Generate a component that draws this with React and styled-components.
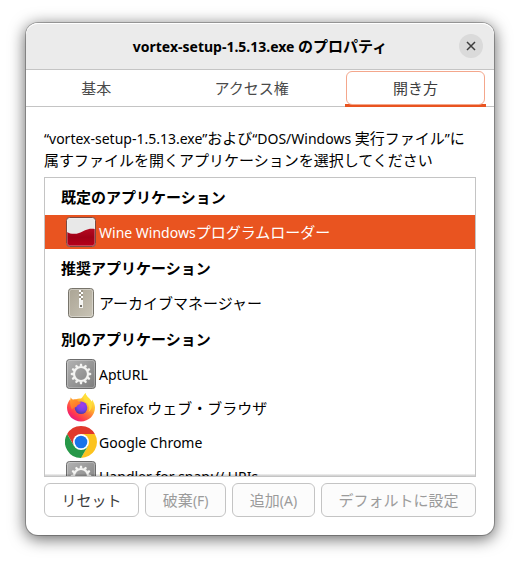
import { useState } from "react";
import styled, { createGlobalStyle } from "styled-components";

const colors = {
  accent: "#e95420",
  border: "#c4c4c4",
  text: "#000000",
};

const GlobalStyle = createGlobalStyle`
  * {
    box-sizing: border-box;
  }
  body {
    margin: 0;
    background-color: white;
    color: ${colors.text};
    font-family: "Noto Sans", "Noto Sans CJK JP", sans-serif;
    font-size: 15px;
    line-height: 22px;
  }
`;

const Desktop = styled.div`
  display: flex;
  height: 100vh;
  padding: 23px 26px 29px;
`;
const Dialog = styled.main`
  flex: 1;
  min-width: 0;
  display: flex;
  flex-direction: column;
  background-color: white;
  border-radius: 12px;
  box-shadow: 0 0 0 1px rgba(0, 0, 0, 0.25), 0 3px 16px 1px rgba(0, 0, 0, 0.6);
`;
const Header = styled.header`
  display: grid;
  grid-template-columns: 24px 1fr 24px;
  align-items: center;
  height: 47px;
  padding: 0 11px;
  background-color: #ebebeb;
  border-bottom: 1px solid ${colors.border};
  border-radius: 12px 12px 0 0;
  box-shadow: inset 0 1px white;
`;
const Title = styled.h1`
  grid-column: 2;
  margin: 0;
  font-size: 15px;
  line-height: 22px;
  font-weight: bold;
  text-align: center;
  white-space: nowrap;
`;
const CloseButton = styled.button`
  display: grid;
  place-items: center;
  width: 24px;
  height: 24px;
  padding: 0;
  border: none;
  border-radius: 50%;
  background-color: #dadada;
  color: #3d3d3d;
`;
const Tabs = styled.div`
  display: flex;
  gap: 2px;
  height: 37px;
  padding: 0 8px;
  border-bottom: 1px solid ${colors.border};
`;
const Tab = styled.button`
  flex: ${(props) => props.$grow} 1 0;
  display: flex;
  margin-bottom: -1px;
  padding: 1px;
  border: none;
  border-bottom: 3px solid
    ${(props) => (props.$active ? colors.accent : "transparent")};
  background: none;
  color: ${(props) => (props.$active ? "#3d3d3d" : "#4a4a4a")};
  font: inherit;
`;
const TabFocus = styled.span`
  flex: 1;
  align-self: stretch;
  display: grid;
  place-items: center;
  margin-bottom: -2px;
  border: 1px solid ${(props) => (props.$active ? "#f4a78c" : "transparent")};
  border-radius: 6px;
`;
const Content = styled.section`
  flex: 1;
  min-height: 0;
  display: flex;
  flex-direction: column;
  gap: 6px;
  padding: 20px 18px 18px;
`;
const Description = styled.p`
  margin: 0;
`;
const AppList = styled.div`
  flex: 1 1 0;
  min-height: 0;
  overflow: hidden;
  position: relative;
  border: 1px solid ${colors.border};

  &::after {
    content: "";
    position: absolute;
    inset: auto 0 0;
    height: 2px;
    background: linear-gradient(rgba(0, 0, 0, 0.05), rgba(0, 0, 0, 0.2));
  }
`;
const GroupTitle = styled.h2`
  display: flex;
  align-items: center;
  height: 37px;
  margin: 0;
  padding: 0 16px;
  font-size: 15px;
  font-weight: bold;
`;
const AppRow = styled.div`
  display: flex;
  align-items: center;
  gap: 2px;
  height: 34px;
  padding: 0 20px;
  white-space: nowrap;
  background-color: ${(props) => (props.$selected ? colors.accent : "white")};
  color: ${(props) => (props.$selected ? "white" : colors.text)};

  svg {
    flex: none;
  }
`;
const Actions = styled.div`
  display: flex;
  gap: 6px;
`;
const ActionButton = styled.button`
  flex: 1 1 auto;
  height: 34px;
  padding: 0 16px;
  border: 1px solid ${colors.border};
  border-radius: 6px;
  background-color: white;
  color: #3d3d3d;
  font: inherit;
  white-space: nowrap;

  &:disabled {
    background-color: #fcfcfc;
    color: #9b9b9b;
  }
`;
// latin runs look too large next to kana at the same size
const Latin = styled.span`
  font-size: 14px;
  line-height: 1;
`;

const Label = ({ children }) =>
  children
    .split(/([ -~“”]+)/)
    .filter(Boolean)
    .map((part) =>
      /^[ -~“”]/.test(part) ? <Latin key={part}>{part}</Latin> : part
    );

const WineIcon = () => (
  <svg width="32" height="32" viewBox="0 0 32 32" aria-hidden="true">
    <defs>
      <linearGradient id="wine" x1="0" y1="0" x2="0" y2="1">
        <stop offset="0" stopColor="#b50a22" />
        <stop offset="0.5" stopColor="#a00016" />
        <stop offset="1" stopColor="#b8001a" />
      </linearGradient>
    </defs>
    <rect x="1.5" y="1.5" width="29" height="29" rx="3" fill="#e8e8e8" />
    <path
      d="M2 16c3 2 8 2.500 12 1 5-1.800 9-5.500 16-4v14.500a2.500 2.500 0 0 1-2.500 2.500h-23A2.500 2.500 0 0 1 2 27.500z"
      fill="url(#wine)"
    />
    <rect x="2.500" y="2.500" width="27" height="27" rx="2" fill="none" stroke="white" strokeOpacity="0.25" />
    <rect x="1.500" y="1.500" width="29" height="29" rx="3" fill="none" stroke="#7b4a42" />
  </svg>
);

const ArchiveIcon = () => (
  <svg width="32" height="32" viewBox="0 0 32 32" aria-hidden="true">
    <defs>
      <linearGradient id="archive" x1="0" y1="0" x2="1" y2="1">
        <stop offset="0" stopColor="#aaa494" />
        <stop offset="1" stopColor="#c9c4b6" />
      </linearGradient>
    </defs>
    <rect x="3.500" y="1.500" width="25" height="29" rx="3" fill="url(#archive)" stroke="#77746b" />
    <rect x="4.500" y="2.500" width="23" height="27" rx="2" fill="none" stroke="white" strokeOpacity="0.35" />
    <path
      d="M14 3h2v2h-2zM16 5h2v2h-2zM14 7h2v2h-2zM16 9h2v2h-2zM14 11h2v2h-2z"
      fill="white"
    />
    <path
      d="M16 3h2v2h-2zM14 5h2v2h-2zM16 7h2v2h-2zM14 9h2v2h-2zM16 11h2v2h-2z"
      fill="#9b9586"
    />
    <path d="M14 13h4v8h-4z" fill="#f5f5f2" />
    <path d="M15 18h2v2h-2z" fill="#77746b" />
  </svg>
);

const teeth = Array.from({ length: 12 }, (_, i) => i * 30);

const GearIcon = () => (
  <svg width="32" height="32" viewBox="0 0 32 32" aria-hidden="true">
    <defs>
      <linearGradient id="gear" x1="0" y1="0" x2="1" y2="1">
        <stop offset="0" stopColor="#b4b4b4" />
        <stop offset="1" stopColor="#7c7c7c" />
      </linearGradient>
    </defs>
    <rect x="1.500" y="1.500" width="29" height="29" rx="3" fill="url(#gear)" stroke="#6c6c6c" />
    <rect x="2.500" y="2.500" width="27" height="27" rx="2" fill="none" stroke="white" strokeOpacity="0.25" />
    <circle cx="16" cy="16" r="7" fill="none" stroke="#f4f4f2" strokeWidth="2.200" />
    {teeth.map((angle) => (
      <path
        key={angle}
        d="M15 5.800h2l.4 2.600h-2.800z"
        fill="#f4f4f2"
        transform={`rotate(${angle} 16 16)`}
      />
    ))}
  </svg>
);

const FirefoxIcon = () => (
  <svg width="32" height="32" viewBox="0 0 32 32" aria-hidden="true">
    <defs>
      <linearGradient id="fx-body" x1="0.85" y1="0.1" x2="0.2" y2="0.95">
        <stop offset="0" stopColor="#fff44f" />
        <stop offset="0.3" stopColor="#ffbd2e" />
        <stop offset="0.55" stopColor="#ff7139" />
        <stop offset="0.8" stopColor="#ff3750" />
        <stop offset="1" stopColor="#e31587" />
      </linearGradient>
      <radialGradient id="fx-globe" cx="0.6" cy="0.3" r="0.7">
        <stop offset="0" stopColor="#a63ce8" />
        <stop offset="0.6" stopColor="#7542e5" />
        <stop offset="1" stopColor="#4f3aa8" />
      </radialGradient>
      <linearGradient id="fx-head" x1="0" y1="0" x2="0.6" y2="1">
        <stop offset="0" stopColor="#ffa62b" />
        <stop offset="1" stopColor="#ff6a2b" />
      </linearGradient>
    </defs>
    <path
      d="M20.500 1c.5 2.500 2.200 4 4 5.700 1 1 1.700 2 2 3l.7-2C29 10.500 30 13 30 15.600 30 23.500 23.800 29.500 16 29.500S2 23.500 2 15.600c0-3.600 1.600-6.200 3-8.100l.8 2C7.200 8 9 7.400 11 7.300c1.600-.8 3.300-.9 5-.7C17.500 5.300 18.800 3 20.500 1z"
      fill="url(#fx-body)"
    />
    <circle cx="16" cy="15.700" r="6.300" fill="url(#fx-globe)" />
    <path
      d="M5.700 5.200c.7 1.300 1.700 2.200 3 2.500 1.500-.3 2.600 0 3.600.7.8 1.200 2 1.700 3.500 1.800-.1 1.500-1.500 2-3 2.700-.9.500-.8 1.600-1.900 2.200C9 15.500 8 16.500 7 17.500 5 14 4.500 9.500 5.700 5.200z"
      fill="url(#fx-head)"
    />
    <path
      d="M20.500 1c.5 2.500 2.200 4 4 5.700C28 10 28 17 23.500 20c1.500-3.500.7-7.500-2.200-9.500-2-1.400-3-3-2.800-5.500.3-1.500 1-2.800 2-4z"
      fill="#ffdf3a"
      fillOpacity="0.85"
    />
  </svg>
);

const ChromeIcon = () => (
  <svg width="32" height="32" viewBox="0 0 48 48" aria-hidden="true">
    <path d="M44.780 12A24 24 0 0 0 3.210 12L13.600 30 24 24V12z" fill="#e0382c" />
    <path d="M24 12h20.780A24 24 0 0 1 24 48l10.390-18L24 24z" fill="#fcc31e" />
    <path d="M3.210 12A24 24 0 0 0 24 48l10.390-18L24 24 13.600 30z" fill="#269848" />
    <circle cx="24" cy="24" r="12" fill="white" />
    <circle cx="24" cy="24" r="9.500" fill="#1a73e8" />
  </svg>
);

const CloseIcon = () => (
  <svg width="10" height="10" viewBox="0 0 10 10" aria-hidden="true">
    <path d="M1 1l8 8M9 1L1 9" stroke="currentColor" strokeWidth="1.500" />
  </svg>
);

const tabs = [
  { label: "基本", grow: 124 },
  { label: "アクセス権", grow: 183 },
  { label: "開き方", grow: 141 },
];

const groups = [
  {
    title: "既定のアプリケーション",
    apps: [{ name: "Wine Windowsプログラムローダー", Icon: WineIcon }],
  },
  {
    title: "推奨アプリケーション",
    apps: [{ name: "アーカイブマネージャー", Icon: ArchiveIcon }],
  },
  {
    title: "別のアプリケーション",
    apps: [
      { name: "AptURL", Icon: GearIcon },
      { name: "Firefox ウェブ・ブラウザ", Icon: FirefoxIcon },
      { name: "Google Chrome", Icon: ChromeIcon },
      { name: "Handler for snap:// URIs", Icon: GearIcon },
    ],
  },
];

const App = () => {
  const [activeTab, setActiveTab] = useState("開き方");
  const [selected, setSelected] = useState("Wine Windowsプログラムローダー");

  return (
    <>
      <GlobalStyle />
      <Desktop lang="ja">
        <Dialog>
          <Header>
            <Title>
              <Label>vortex-setup-1.5.13.exe のプロパティ</Label>
            </Title>
            <CloseButton type="button" aria-label="閉じる">
              <CloseIcon />
            </CloseButton>
          </Header>
          <Tabs role="tablist">
            {tabs.map(({ label, grow }) => (
              <Tab
                key={label}
                type="button"
                role="tab"
                aria-selected={label === activeTab}
                $active={label === activeTab}
                $grow={grow}
                onClick={() => setActiveTab(label)}
              >
                <TabFocus $active={label === activeTab}>{label}</TabFocus>
              </Tab>
            ))}
          </Tabs>
          <Content>
            <Description>
              <Label>
                “vortex-setup-1.5.13.exe”および“DOS/Windows 実行ファイル”に属すファイルを開くアプリケーションを選択してください
              </Label>
            </Description>
            <AppList role="listbox">
              {groups.map(({ title, apps }) => (
                <div key={title} role="group" aria-label={title}>
                  <GroupTitle>{title}</GroupTitle>
                  {apps.map(({ name, Icon }) => (
                    <AppRow
                      key={name}
                      role="option"
                      aria-selected={name === selected}
                      $selected={name === selected}
                      onClick={() => setSelected(name)}
                    >
                      <Icon />
                      <span>
                        <Label>{name}</Label>
                      </span>
                    </AppRow>
                  ))}
                </div>
              ))}
            </AppList>
            <Actions>
              <ActionButton type="button">リセット</ActionButton>
              <ActionButton type="button" disabled>
                <Label>破棄(F)</Label>
              </ActionButton>
              <ActionButton type="button" disabled>
                <Label>追加(A)</Label>
              </ActionButton>
              <ActionButton type="button" disabled>
                デフォルトに設定
              </ActionButton>
            </Actions>
          </Content>
        </Dialog>
      </Desktop>
    </>
  );
};

export default App;
